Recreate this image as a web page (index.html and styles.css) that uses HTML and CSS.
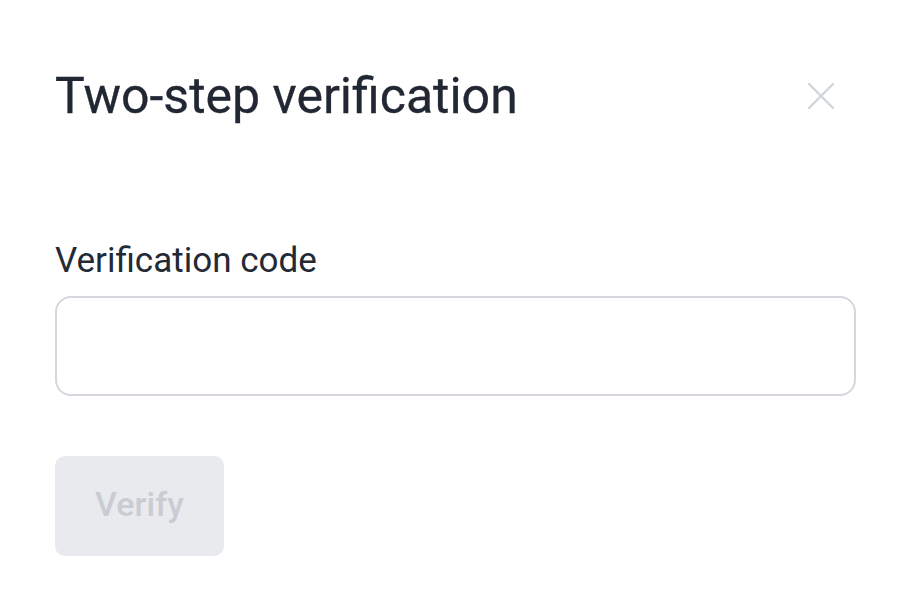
FILE: index.html
```html
<!DOCTYPE html>
<html lang="en">
<head>
<meta charset="utf-8">
<title>Two-step verification</title>
<link rel="stylesheet" href="styles.css">
</head>
<body>
<div class="modal">
  <div class="header">
    <h1 class="title">Two-step verification</h1>
    <button class="close" aria-label="Close">
      <svg width="28" height="28" viewBox="0 0 28 28"><path d="M2 2 L26 26 M26 2 L2 26" stroke="#d1d5db" stroke-width="2.4" stroke-linecap="round" fill="none"/></svg>
    </button>
  </div>
  <form class="form">
    <label class="label" for="code">Verification code</label>
    <input class="input" id="code" type="text">
    <button class="verify" type="button" disabled>Verify</button>
  </form>
</div>
</body>
</html>
```
FILE: styles.css
```css
html, body {
  margin: 0;
  background: #ffffff;
}
body {
  font-family: Roboto, "Liberation Sans", sans-serif;
  color: #212733;
}
.modal {
  padding: 64px 54px 0 55px;
}
.header {
  display: flex;
  align-items: center;
  justify-content: space-between;
}
.title {
  margin: 0;
  font-size: 50px;
  font-weight: 400;
  line-height: 64px;
  color: #212733;
  -webkit-text-stroke: 0.3px #212733;
}
.close {
  background: none;
  border: 0;
  padding: 0;
  margin-right: 21px;
  width: 28px;
  height: 28px;
  display: flex;
}
.form {
  display: flex;
  flex-direction: column;
  align-items: flex-start;
  margin-top: 113px;
}
.label {
  font-size: 35px;
  line-height: 40px;
  color: #232935;
}
.input {
  box-sizing: border-box;
  margin-top: 15px;
  width: 801px;
  height: 100px;
  border: 2px solid #d4d7dc;
  border-radius: 16px;
  background: #fff;
  outline: none;
}
.verify {
  margin-top: 60px;
  box-sizing: border-box;
  width: 169px;
  height: 100px;
  border: 0;
  border-radius: 10px;
  padding: 0 0 4px;
  background: #e9eaee;
  color: #c9ccd3;
  font-family: Roboto, "Liberation Sans", sans-serif;
  font-size: 34px;
  font-weight: 500;
}
```
